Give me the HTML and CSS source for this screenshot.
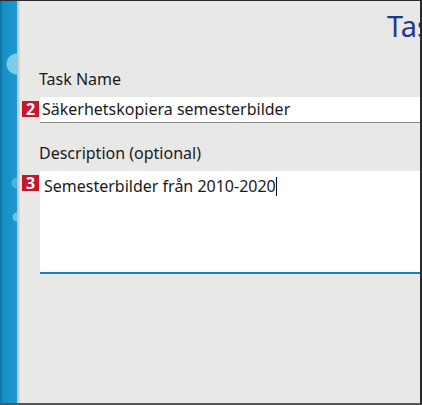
FILE: index.html
```html
<!DOCTYPE html>
<html lang="sv">
<head>
<meta charset="utf-8">
<link rel="stylesheet" href="styles.css">
</head>
<body>
<div class="frame">
  <div class="strip"></div>
  <div class="divider"></div>
  <div class="panel">
    <div class="title">Tas</div>
    <div class="label label-name">Task Name</div>
    <div class="field">
      <span class="badge">2</span>
      <div class="input">Säkerhetskopiera semesterbilder</div>
    </div>
    <div class="label label-desc">Description (optional)</div>
    <div class="field">
      <span class="badge">3</span>
      <div class="textarea"><span>Semesterbilder från 2010-2020</span><span class="caret"></span></div>
    </div>
  </div>
</div>
</body>
</html>
```

FILE: styles.css
```css
html, body {
  margin: 0;
  padding: 0;
  background: #e8e8e6;
}
.frame {
  width: 422px;
  height: 405px;
  box-sizing: border-box;
  display: flex;
  border-top: 1px solid #2a2a2a;
  border-right: 2px solid #2a2a2a;
  border-bottom: 2px solid #555;
  overflow: hidden;
  font-family: "Noto Sans", "Open Sans", sans-serif;
  color: #1a1a1a;
}
.strip {
  width: 17px;
  flex: none;
  background:
    radial-gradient(circle at 17px 63px, #7ccde6 0 10px, transparent 11px),
    radial-gradient(circle at 17px 182px, #4fb3d8 0 5px, transparent 6px),
    radial-gradient(circle at 17px 216px, #6cc4e2 0 4px, transparent 5px),
    linear-gradient(90deg, #0f6f9e 0, #1690c6 3px, #1a9ad0 100%);
}
.divider {
  width: 3px;
  flex: none;
  background: linear-gradient(90deg, #b9bdbf, #dcdcdc);
}
.panel {
  flex: 1;
  min-width: 0;
  background: #e8e8e6;
  overflow: hidden;
  display: flex;
  flex-direction: column;
}
.title {
  padding-left: 367px;
  white-space: nowrap;
  font-size: 29px;
  line-height: 40px;
  margin-top: 5px;
  color: #1b3b8a;
}
.label {
  padding-left: 19px;
  font-size: 16px;
  line-height: 22px;
  white-space: nowrap;
}
.label-name {
  margin-top: 22px;
}
.label-desc {
  margin-top: 19px;
}
.field {
  display: flex;
  align-items: flex-start;
  padding-left: 2px;
  margin-top: 7px;
}
.badge {
  flex: none;
  width: 17px;
  height: 16px;
  margin-top: 4px;
  margin-right: 1px;
  background: #c8162c;
  color: #fff;
  font-weight: bold;
  font-size: 16px;
  line-height: 16px;
  text-align: center;
}
.input {
  flex: 1;
  height: 25px;
  background: #fff;
  border-bottom: 1px solid #8a8a8a;
  padding-left: 2px;
  font-size: 16px;
  line-height: 25px;
  white-space: nowrap;
}
.textarea {
  flex: 1;
  height: 99px;
  padding-top: 2px;
  background: #fff;
  border-bottom: 2px solid #1a7fbf;
  padding-left: 4px;
  font-size: 16px;
  line-height: 26px;
  white-space: nowrap;
}
.caret {
  display: inline-block;
  width: 1px;
  height: 19px;
  background: #111;
  vertical-align: -4px;
}
```
